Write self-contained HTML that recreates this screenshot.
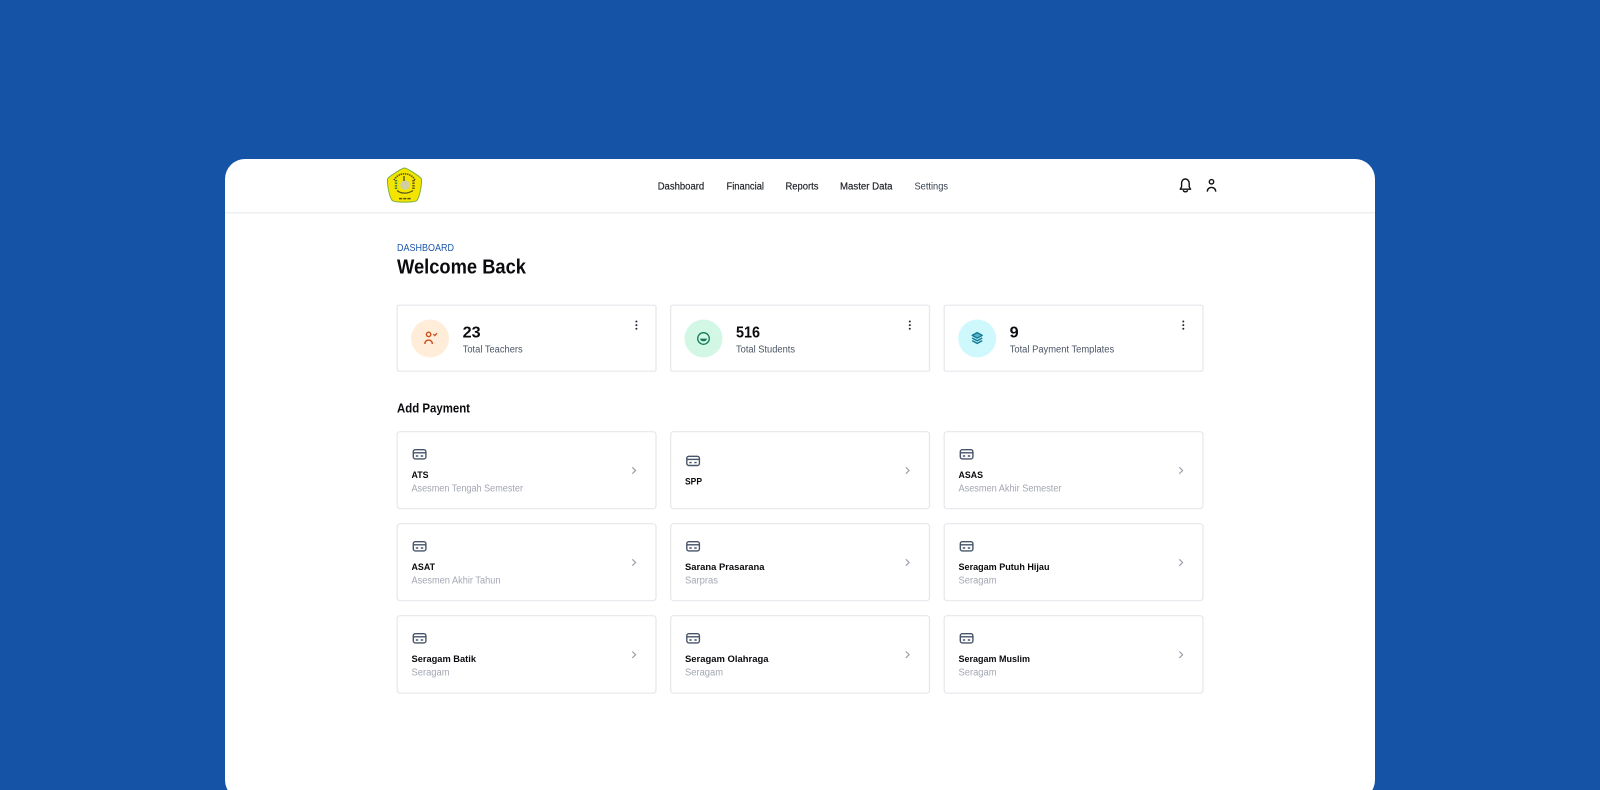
<!DOCTYPE html>
<html><head><meta charset="utf-8"><title>Dashboard</title>
<style>
html,body{margin:0;padding:0;background:#1453a5;width:1600px;height:790px;overflow:hidden}
svg{display:block}
text{font-family:"Liberation Sans",sans-serif}
.n{font-size:10px;fill:#1a1d24;stroke:#1a1d24;stroke-width:.15}
.c{fill:#fff;stroke:#e5e7eb;stroke-width:1.2}
.num{font-size:16px;font-weight:700;fill:#0b0b0f}
.lab{font-size:10px;fill:#4b5563}
.t{font-size:9.6px;font-weight:700;fill:#0b0b0f}
.s{font-size:10px;fill:#a3a7b3}
.ic{fill:none;stroke:#475569;stroke-width:1.4}
.ch{fill:none;stroke:#9aa0ab;stroke-width:1.2}
</style></head><body>
<svg width="1600" height="790" viewBox="0 0 1600 790" xmlns="http://www.w3.org/2000/svg">
<defs>
<g id="card">
<rect x="0.3" y="0.3" width="12.6" height="9.2" rx="2" class="ic"/>
<path d="M0.3 3.4H12.9" class="ic"/>
<path d="M2.8 6.6H5.2M7.8 6.6H10.2" class="ic"/>
</g>
<g id="dots"><circle cx="0" cy="0" r="1" fill="#1f2937"/><circle cx="0" cy="3.6" r="1" fill="#1f2937"/><circle cx="0" cy="7.2" r="1" fill="#1f2937"/></g>
</defs>
<rect width="1600" height="790" fill="#1453a5"/>
<rect x="225" y="159" width="1150" height="641" rx="20" fill="#fff"/>
<rect x="225" y="212" width="1150" height="1.5" fill="#eeeff1"/>

<!-- logo -->
<g>
<path d="M404.5 168C407 168 419 176 421 178.2C422.4 180 420.6 195 417 200.2C415 202.8 394 202.8 392 200.2C388.4 195 386.6 180 388 178.2C390 176 402 168 404.5 168Z" fill="#f4e500" stroke="#7fae3c" stroke-width="1"/>
<path d="M394 180A12 12 0 0 1 415 180" fill="none" stroke="#55551a" stroke-width="1.6" stroke-dasharray="1.4 .8"/>
<circle cx="405" cy="185" r="4.8" fill="#cfcfa0"/>
<path d="M404 176V181" stroke="#55551a" stroke-width="1.4"/>
<path d="M396 180V190" stroke="#3d8a45" stroke-width="2.4" stroke-dasharray="1.5 1"/>
<path d="M413.5 180V190" stroke="#6b5a18" stroke-width="2.4" stroke-dasharray="1.5 1"/>
<path d="M397 190.5C401 194 408 194 413 190.5" fill="none" stroke="#5a5a20" stroke-width="1.3"/>
<path d="M399 198.6H411" stroke="#55551a" stroke-width="1.5" stroke-dasharray="3.2 1"/>
</g>

<!-- nav -->
<text class="n" x="657.7" y="189.7" textLength="46.5" lengthAdjust="spacingAndGlyphs">Dashboard</text>
<text class="n" x="726.5" y="189.7" textLength="37.5" lengthAdjust="spacingAndGlyphs">Financial</text>
<text class="n" x="785.5" y="189.7" textLength="33" lengthAdjust="spacingAndGlyphs">Reports</text>
<text class="n" x="840" y="189.7" textLength="52.5" lengthAdjust="spacingAndGlyphs">Master Data</text>
<text x="914.5" y="189.7" font-size="10" fill="#374151" textLength="33.5" lengthAdjust="spacingAndGlyphs">Settings</text>

<!-- bell and user -->
<path d="M1180.2 189.2H1190.6L1189.2 186.8V183.5C1189.2 180.8 1187.5 179 1185.4 179C1183 179 1181.6 180.8 1181.6 183.5V186.8Z" fill="none" stroke="#111" stroke-width="1.4" stroke-linejoin="round"/>
<path d="M1183.2 190.2C1183.8 192.4 1187 192.4 1187.6 190.2" fill="none" stroke="#111" stroke-width="1.4"/>
<circle cx="1211.5" cy="181.8" r="2.2" fill="none" stroke="#111" stroke-width="1.4"/>
<path d="M1207.3 191.6C1207.3 186 1215.7 186 1215.7 191.6" fill="none" stroke="#111" stroke-width="1.4"/>

<!-- heading -->
<text x="397" y="251" font-size="10" fill="#1c58ab" textLength="57" lengthAdjust="spacingAndGlyphs">DASHBOARD</text>
<text x="397" y="273.5" font-size="20" font-weight="700" fill="#0b0b0f" textLength="129" lengthAdjust="spacingAndGlyphs">Welcome Back</text>

<!-- stats -->
<rect class="c" x="397.2" y="305.2" width="258.8" height="66" rx="1.5"/>
<rect class="c" x="670.7" y="305.2" width="258.8" height="66" rx="1.5"/>
<rect class="c" x="944.2" y="305.2" width="258.8" height="66" rx="1.5"/>

<circle cx="430" cy="338.5" r="19" fill="#ffedd9"/>
<circle cx="428.6" cy="334.4" r="2.2" fill="none" stroke="#c9521c" stroke-width="1.4"/>
<path d="M424.8 344C424.8 338.8 432.4 338.8 432.4 344" fill="none" stroke="#c9521c" stroke-width="1.4"/>
<path d="M433.3 334.2L434.8 335.6L437 333.2" fill="none" stroke="#c9521c" stroke-width="1.3"/>
<text class="num" x="462.7" y="337.5" textLength="18" lengthAdjust="spacingAndGlyphs">23</text>
<text class="lab" x="462.7" y="352.5" textLength="60" lengthAdjust="spacingAndGlyphs">Total Teachers</text>
<use href="#dots" x="636.4" y="321.5"/>

<circle cx="703.5" cy="338.5" r="19" fill="#d2f8e5"/>
<circle cx="703.5" cy="338.5" r="5.8" fill="none" stroke="#137a5b" stroke-width="1.3"/>
<path d="M700 338.6H707C706.6 342.2 700.4 342.2 700 338.6Z" fill="#137a5b"/>
<text class="num" x="736" y="337.5" textLength="24" lengthAdjust="spacingAndGlyphs">516</text>
<text class="lab" x="736" y="352.5" textLength="59" lengthAdjust="spacingAndGlyphs">Total Students</text>
<use href="#dots" x="909.8" y="321.5"/>

<circle cx="977.2" cy="338.5" r="19" fill="#cff8fd"/>
<path d="M977.2 332.6L982.2 335.4L977.2 338.2L972.2 335.4Z" fill="#5fb3c4" stroke="#127c95" stroke-width="1.4" stroke-linejoin="round"/>
<path d="M972.2 338L977.2 340.8L982.2 338" fill="none" stroke="#127c95" stroke-width="1.5"/>
<path d="M972.2 340.6L977.2 343.4L982.2 340.6" fill="none" stroke="#127c95" stroke-width="1.5"/>
<text class="num" x="1009.7" y="337.5" textLength="9" lengthAdjust="spacingAndGlyphs">9</text>
<text class="lab" x="1009.7" y="352.5" textLength="104.5" lengthAdjust="spacingAndGlyphs">Total Payment Templates</text>
<use href="#dots" x="1183.3" y="321.5"/>

<text x="397" y="412.5" font-size="12.5" font-weight="700" fill="#0b0b0f" textLength="73" lengthAdjust="spacingAndGlyphs">Add Payment</text>

<!-- row 1 -->
<rect class="c" x="397.2" y="431.7" width="258.8" height="77" rx="3"/>
<rect class="c" x="670.7" y="431.7" width="258.8" height="77" rx="3"/>
<rect class="c" x="944.2" y="431.7" width="258.8" height="77" rx="3"/>
<use href="#card" x="413" y="449.4"/><use href="#card" x="686.5" y="456"/><use href="#card" x="960" y="449.4"/>
<text class="t" x="411.5" y="478" textLength="17" lengthAdjust="spacingAndGlyphs">ATS</text>
<text class="s" x="411.5" y="491.5" textLength="111.5" lengthAdjust="spacingAndGlyphs">Asesmen Tengah Semester</text>
<text class="t" x="685" y="484.5" textLength="17" lengthAdjust="spacingAndGlyphs">SPP</text>
<text class="t" x="958.5" y="478" textLength="24.5" lengthAdjust="spacingAndGlyphs">ASAS</text>
<text class="s" x="958.5" y="491.5" textLength="103" lengthAdjust="spacingAndGlyphs">Asesmen Akhir Semester</text>

<!-- row 2 -->
<rect class="c" x="397.2" y="523.7" width="258.8" height="77" rx="3"/>
<rect class="c" x="670.7" y="523.7" width="258.8" height="77" rx="3"/>
<rect class="c" x="944.2" y="523.7" width="258.8" height="77" rx="3"/>
<use href="#card" x="413" y="541.4"/><use href="#card" x="686.5" y="541.4"/><use href="#card" x="960" y="541.4"/>
<text class="t" x="411.5" y="570" textLength="23.5" lengthAdjust="spacingAndGlyphs">ASAT</text>
<text class="s" x="411.5" y="583.5" textLength="89" lengthAdjust="spacingAndGlyphs">Asesmen Akhir Tahun</text>
<text class="t" x="685" y="570" textLength="79.5" lengthAdjust="spacingAndGlyphs">Sarana Prasarana</text>
<text class="s" x="685" y="583.5" textLength="33" lengthAdjust="spacingAndGlyphs">Sarpras</text>
<text class="t" x="958.5" y="570" textLength="91" lengthAdjust="spacingAndGlyphs">Seragam Putuh Hijau</text>
<text class="s" x="958.5" y="583.5" textLength="38" lengthAdjust="spacingAndGlyphs">Seragam</text>

<!-- row 3 -->
<rect class="c" x="397.2" y="615.7" width="258.8" height="77.5" rx="3"/>
<rect class="c" x="670.7" y="615.7" width="258.8" height="77.5" rx="3"/>
<rect class="c" x="944.2" y="615.7" width="258.8" height="77.5" rx="3"/>
<use href="#card" x="413" y="633.4"/><use href="#card" x="686.5" y="633.4"/><use href="#card" x="960" y="633.4"/>
<text class="t" x="411.5" y="662" textLength="64.5" lengthAdjust="spacingAndGlyphs">Seragam Batik</text>
<text class="s" x="411.5" y="675.5" textLength="38" lengthAdjust="spacingAndGlyphs">Seragam</text>
<text class="t" x="685" y="662" textLength="83.5" lengthAdjust="spacingAndGlyphs">Seragam Olahraga</text>
<text class="s" x="685" y="675.5" textLength="38" lengthAdjust="spacingAndGlyphs">Seragam</text>
<text class="t" x="958.5" y="662" textLength="71.5" lengthAdjust="spacingAndGlyphs">Seragam Muslim</text>
<text class="s" x="958.5" y="675.5" textLength="38" lengthAdjust="spacingAndGlyphs">Seragam</text>

<!-- chevrons -->
<path class="ch" d="M632.3 467.3L635.6 470.5L632.3 473.7"/>
<path class="ch" d="M905.8 467.3L909.1 470.5L905.8 473.7"/>
<path class="ch" d="M1179.3 467.3L1182.6 470.5L1179.3 473.7"/>
<path class="ch" d="M632.3 559.3L635.6 562.5L632.3 565.7"/>
<path class="ch" d="M905.8 559.3L909.1 562.5L905.8 565.7"/>
<path class="ch" d="M1179.3 559.3L1182.6 562.5L1179.3 565.7"/>
<path class="ch" d="M632.3 651.5L635.6 654.7L632.3 657.9"/>
<path class="ch" d="M905.8 651.5L909.1 654.7L905.8 657.9"/>
<path class="ch" d="M1179.3 651.5L1182.6 654.7L1179.3 657.9"/>
</svg>
</body></html>
